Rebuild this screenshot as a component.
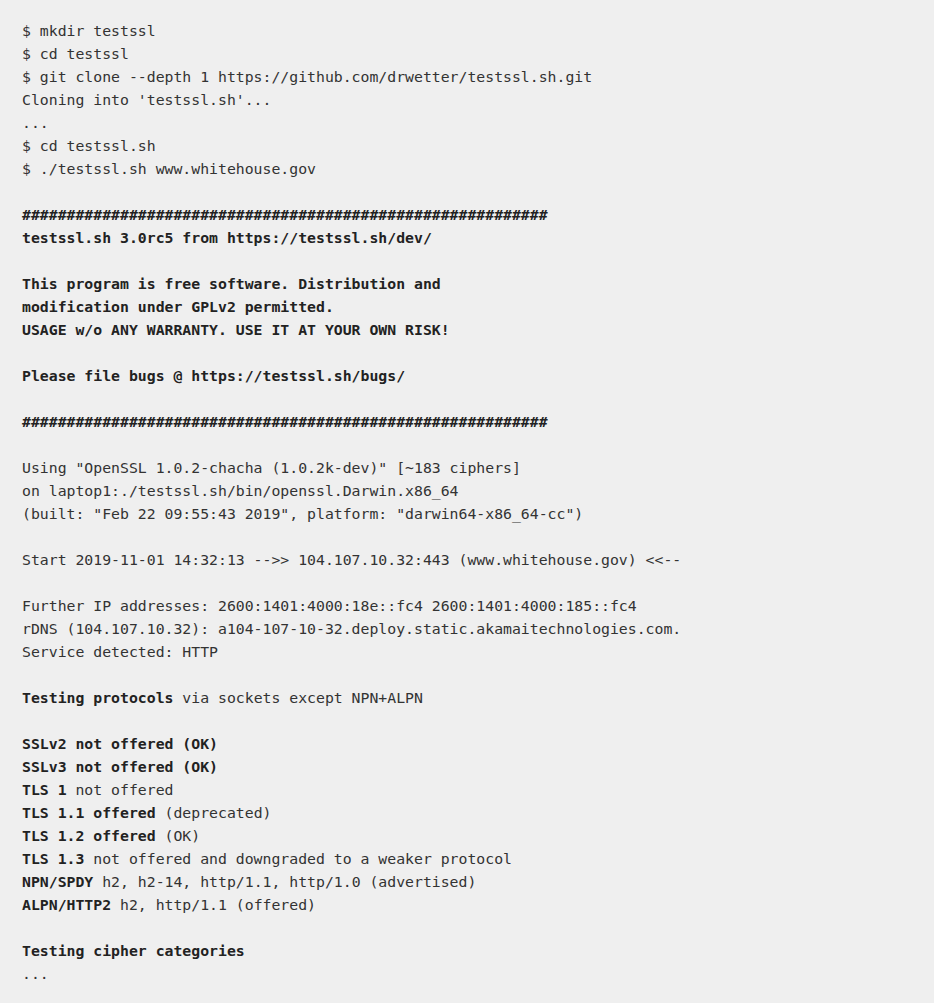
// App.jsx - terminal output block
const HASHES = '###########################################################';

const LINES = [
  [['$ mkdir testssl']],
  [['$ cd testssl']],
  [['$ git clone --depth 1 https://github.com/drwetter/testssl.sh.git']],
  [["Cloning into 'testssl.sh'..."]],
  [['...']],
  [['$ cd testssl.sh']],
  [['$ ./testssl.sh www.whitehouse.gov']],
  [],
  [[HASHES, true]],
  [['testssl.sh 3.0rc5 from https://testssl.sh/dev/', true]],
  [],
  [['This program is free software. Distribution and', true]],
  [['modification under GPLv2 permitted.', true]],
  [['USAGE w/o ANY WARRANTY. USE IT AT YOUR OWN RISK!', true]],
  [],
  [['Please file bugs @ https://testssl.sh/bugs/', true]],
  [],
  [[HASHES, true]],
  [],
  [['Using "OpenSSL 1.0.2-chacha (1.0.2k-dev)" [~183 ciphers]']],
  [['on laptop1:./testssl.sh/bin/openssl.Darwin.x86_64']],
  [['(built: "Feb 22 09:55:43 2019", platform: "darwin64-x86_64-cc")']],
  [],
  [['Start 2019-11-01 14:32:13 -->> 104.107.10.32:443 (www.whitehouse.gov) <<--']],
  [],
  [['Further IP addresses: 2600:1401:4000:18e::fc4 2600:1401:4000:185::fc4']],
  [['rDNS (104.107.10.32): a104-107-10-32.deploy.static.akamaitechnologies.com.']],
  [['Service detected: HTTP']],
  [],
  [['Testing protocols', true], [' via sockets except NPN+ALPN']],
  [],
  [['SSLv2 not offered (OK)', true]],
  [['SSLv3 not offered (OK)', true]],
  [['TLS 1', true], [' not offered']],
  [['TLS 1.1 offered', true], [' (deprecated)']],
  [['TLS 1.2 offered', true], [' (OK)']],
  [['TLS 1.3', true], [' not offered and downgraded to a weaker protocol']],
  [['NPN/SPDY', true], [' h2, h2-14, http/1.1, http/1.0 (advertised)']],
  [['ALPN/HTTP2', true], [' h2, http/1.1 (offered)']],
  [],
  [['Testing cipher categories', true]],
  [['...']],
];

export default function App() {
  return (
    <div className="min-h-screen bg-[#efefef]">
      <pre className="px-[22px] pt-[19px] pb-[18px] font-['DejaVu_Sans_Mono',monospace] text-[14.8px] leading-[23px] text-[#333]">
        {LINES.map((parts, i) => (
          <div key={i} className="h-[23px] whitespace-pre">
            {parts.map(([text, bold], j) =>
              bold ? (
                <b key={j} className="font-bold text-[#222]">{text}</b>
              ) : (
                <span key={j}>{text}</span>
              )
            )}
          </div>
        ))}
      </pre>
    </div>
  );
}
